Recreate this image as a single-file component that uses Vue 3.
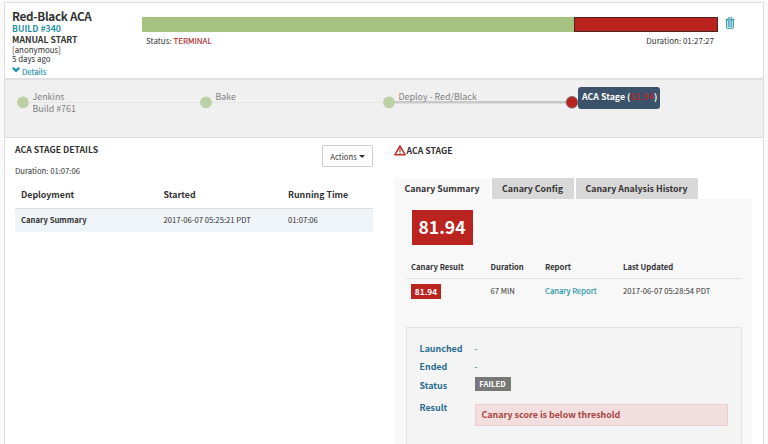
<script setup>
const nodes = [
  { x: 18, label: 'Jenkins', sub: 'Build #761' },
  { x: 201, label: 'Bake' },
  { x: 384, label: 'Deploy - Red/Black' },
]
const tabs = ['Canary Summary', 'Canary Config', 'Canary Analysis History']
</script>

<template>
  <main class="execution">
    <header class="head">
      <div class="info">
        <h1>Red-Black ACA</h1>
        <a class="build">BUILD #340</a>
        <b class="trigger">MANUAL START</b>
        <span class="small">[anonymous]</span>
        <span class="small">5 days ago</span>
        <a class="details">
          <svg width="8" height="6" viewBox="0 0 8 6"><path d="M0 1.5 1.4 0.1 4 2.1 6.6 0.1 8 1.5 4 5.4Z" fill="#1f93a8" /></svg>
          <span>Details</span>
        </a>
      </div>
      <div class="progress">
        <div class="bar"><i class="ok"></i><i class="fail"></i></div>
        <div class="meta">
          <span>Status: <em>TERMINAL</em></span>
          <span class="total">Duration: 01:27:27</span>
        </div>
      </div>
      <svg class="trash" width="10" height="12" viewBox="0 0 10 12" fill="none" stroke="#3a9fb2">
        <path d="M1.5 3H8.5V10.4Q8.5 11.4 7.5 11.4H2.5Q1.5 11.4 1.5 10.4Z" fill="#c3e3e9" />
        <path d="M0.5 2.5H9.5M3 2.2V0.8H7V2.2" />
        <path d="M3.5 4V10M5 4V10M6.5 4V10" stroke-width="0.8" />
      </svg>
    </header>

    <section class="graph">
      <svg class="links" width="758" height="58" viewBox="0 0 758 58">
        <path d="M18 22.5H384" stroke="#e6e6e6" stroke-width="1" />
        <path d="M384 22.3H567" stroke="#c9c9c9" stroke-width="2.6" />
        <circle v-for="n in nodes" :key="n.x" :cx="n.x" cy="22.3" r="5.9" fill="#bbd0a4" />
        <circle cx="567" cy="22.3" r="5.8" fill="#bb231e" stroke="#77706e" stroke-width="1" />
      </svg>
      <div v-for="n in nodes" :key="n.label" class="node" :style="{ left: n.x + 9.5 + 'px' }">
        <span>{{ n.label }}</span><span v-if="n.sub">{{ n.sub }}</span>
      </div>
      <div class="active">ACA Stage (<span>81.94</span>)</div>
    </section>

    <section class="body">
      <div class="left">
        <div class="left-top">
          <div>
            <h2>ACA STAGE DETAILS</h2>
            <p class="duration">Duration: 01:07:06</p>
          </div>
          <button class="actions">Actions <i></i></button>
        </div>
        <div class="steps steps-head"><span>Deployment</span><span>Started</span><span>Running Time</span></div>
        <div class="steps steps-row"><b>Canary Summary</b><span>2017-06-07 05:25:21 PDT</span><span>01:07:06</span></div>
      </div>

      <div class="right">
        <h2 class="stage">
          <svg width="12" height="11" viewBox="0 0 12 11">
            <path d="M6 0.9 11.2 9.8H0.8Z" fill="#fff" stroke="#b5302c" stroke-width="1.5" stroke-linejoin="round" />
            <path d="M6 3.4V6.8M6 7.6V8.8" stroke="#b5302c" stroke-width="1.3" />
          </svg>
          <span>ACA STAGE</span>
        </h2>
        <nav class="tabs">
          <a v-for="(t, i) in tabs" :key="t" :class="['tab', 'tab' + i]">{{ t }}</a>
        </nav>
        <div class="pane">
          <div class="score">81.94</div>
          <div class="canary canary-head"><span>Canary Result</span><span>Duration</span><span>Report</span><span>Last Updated</span></div>
          <div class="canary canary-row">
            <span><b class="pill">81.94</b></span><span>67 MIN</span><a>Canary Report</a><span>2017-06-07 05:28:54 PDT</span>
          </div>
          <dl class="well">
            <dt>Launched</dt><dd>-</dd>
            <dt>Ended</dt><dd>-</dd>
            <dt class="status">Status</dt><dd><b class="failed">FAILED</b></dd>
            <dt class="res">Result</dt><dd class="alert">Canary score is below threshold</dd>
          </dl>
        </div>
      </div>
    </section>
  </main>
</template>

<style>
body { background: #f9f9f9; overflow: hidden; }
</style>

<style scoped>
* { box-sizing: border-box; }
.execution {
  width: 760px; height: 442px; margin: 2px 0 0 4px; overflow: hidden;
  border: 1px solid #dcdcdc; border-bottom: 0; background: #fff;
  font-family: "Noto Sans CJK SC", "Noto Sans", sans-serif; color: #333; font-size: 7.7px;
  white-space: nowrap;
}
h1, h2, p, dl, dd { margin: 0; }
.head { display: flex; height: 75px; }
.info { width: 137px; padding: 6px 0 0 7px; display: flex; flex-direction: column; align-items: flex-start; }
h1 { font-size: 11.7px; line-height: 14px; font-weight: 700; letter-spacing: -0.3px; }
.build { font-size: 8.7px; line-height: 11px; font-weight: 700; color: #1f93a8; }
.trigger { font-size: 8.7px; line-height: 11px; }
.small { font-size: 7.9px; line-height: 9px; }
.details { display: flex; gap: 2px; color: #1f93a8; font-size: 7.7px; line-height: 9px; margin-top: 4px; }
.details, .canary a, .meta em { -webkit-text-stroke: 0.15px currentColor; }
.progress { width: 576px; padding-top: 14px; }
.bar { display: flex; height: 15px; }
.ok { width: 75%; background: #a6c281; }
.fail { width: 25%; background: #bb231e; border: 1px solid #4a2220; }
.meta { display: flex; justify-content: space-between; padding: 3px 4px 0; font-size: 8px; line-height: 12px; }
.meta em { font-style: normal; color: #b02a2a; }
.trash { margin: 14px 0 0 7px; }

.graph { position: relative; height: 60px; background: #f0f0f0; border-top: 2px solid #e0e0e0; border-bottom: 1px solid #dcdcdc; }
.links { display: block; }
.node { position: absolute; top: 11px; display: flex; flex-direction: column; font-size: 8.9px; line-height: 12px; color: #808080; }
.active {
  position: absolute; left: 573px; top: 7px; width: 82px; height: 22px; padding-left: 4px;
  border-radius: 3px; background: #3a536b; color: #fff; font-size: 8.8px; line-height: 19px; font-weight: 700;
}
.active span { color: #a8302f; }

.body { display: flex; }
.left { width: 368px; padding: 6px 0 0 10px; }
.left-top { display: flex; justify-content: space-between; height: 41px; }
h2 { font-size: 8.7px; line-height: 12px; font-weight: 700; }
.duration { margin-top: 9px; line-height: 12px; }
.actions {
  width: 51px; height: 22px; margin-top: 1px; padding: 0; border: 1px solid #ccc; border-radius: 2px; background: #fff;
  display: flex; align-items: center; justify-content: center; gap: 2px; font: inherit; color: #333;
}
.actions i { border: 3px solid transparent; border-top-color: #333; border-bottom: 0; }
.steps { display: grid; grid-template-columns: 142.5px 124.5px 1fr; padding-left: 6px; }
.steps-head { height: 24px; font-size: 8.8px; line-height: 19px; font-weight: 700; border-bottom: 1px solid #ddd; }
.steps-row { height: 23px; line-height: 22px; background: #eff4f8; }

.right { width: 358px; margin-left: 20.5px; padding-top: 7px; }
.stage { display: flex; gap: 1px; }
.tabs { display: flex; gap: 2px; height: 21px; margin-top: 21px; }
.tab { background: #d8d8d8; font-size: 8.8px; line-height: 21px; font-weight: 700; text-align: center; }
.tab0 { width: 96px; padding-left: 1px; background: #f8f8f8; }
.tab1 { width: 82px; }
.tab2 { width: 122px; }
.pane { height: 250px; padding: 11px 10px 0 12px; background: #f8f8f8; }
.score { width: 61px; height: 35px; margin-left: 6px; background: #bb231e; color: #fff; font-size: 17.5px; line-height: 34px; font-weight: 700; text-align: center; }
.canary { display: grid; grid-template-columns: 79.5px 54.5px 78px 1fr; padding-left: 5.5px; }
.canary-head { height: 34px; padding-top: 16px; line-height: 12px; font-weight: 700; border-bottom: 1px solid #e2e2e2; }
.canary-row { height: 48px; padding-top: 6px; line-height: 12px; }
.canary a { color: #1f93a8; }
.pill { display: block; width: 30px; height: 15px; margin-top: -1px; background: #bb231e; color: #fff; font-size: 8.3px; line-height: 14px; text-align: center; }
.well { display: grid; grid-template-columns: 55px 1fr; grid-template-rows: 18px 18px 21px 30px; height: 140px; padding: 12px 13px 0; background: #f4f4f4; border: 1px solid #e2e2e2; font-size: 8.9px; line-height: 18px; color: #276d90; }
dt { font-weight: 700; }
.status { padding-top: 1px; }
.res { padding-top: 2px; }
.failed { display: block; width: 36px; height: 14px; margin-top: 1px; background: #777; color: #fff; font-size: 7.7px; line-height: 14px; text-align: center; }
.alert { height: 22px; margin-top: 7px; padding-left: 6px; background: #f2dede; border: 1px solid #ebccd1; color: #a94442; font-weight: 700; line-height: 20px; }
</style>
